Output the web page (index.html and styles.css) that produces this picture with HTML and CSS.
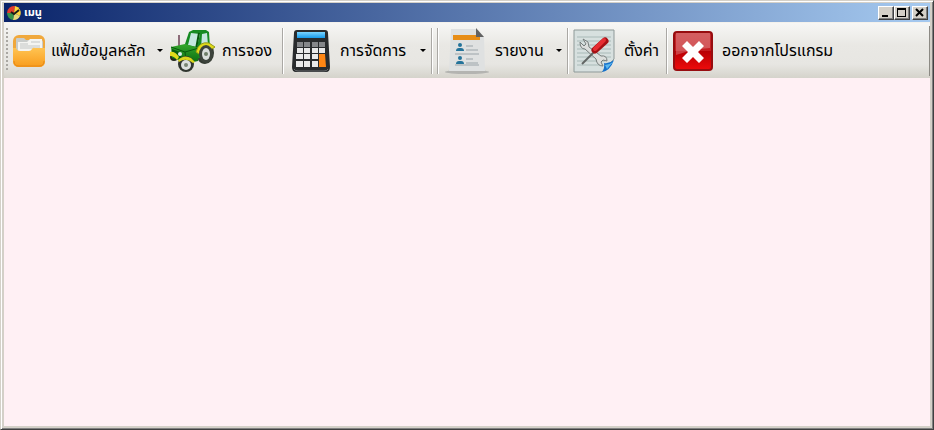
FILE: index.html
```
<!DOCTYPE html>
<html lang="th">

<head>
    <meta charset="UTF-8">
    <title>เมนู</title>
    <link rel="stylesheet" href="styles.css">
</head>

<body>
    <div id="window">
        <div id="title">
            <svg class="logo" viewBox="0 0 16 16">
                <path d="M8 8 1 8A7 7 0 0 1 9 1z" fill="#e43b2c" />
                <path d="M8 8 9 1A7 7 0 0 1 14 11z" fill="#ffd437" />
                <path d="M8 8 14 11A7 7 0 0 1 7 15z" fill="#e8d878" />
                <path d="M8 8 7 15A7 7 0 0 1 1 8z" fill="#39934a" />
                <path d="M5 7 8 9 13 5" fill="none" stroke="#1c1c18" stroke-width="2" />
            </svg>
            <span class="caption">เมนู</span>
            <button type="button" class="control" aria-label="Minimize">
                <svg viewBox="0 0 14 12"><path d="M3 8h6v2H3z" /></svg>
            </button>
            <button type="button" class="control" aria-label="Maximize">
                <svg viewBox="0 0 14 12"><path d="M2 1h9v9H2zM3 3v6h7V3z" fill-rule="evenodd" /></svg>
            </button>
            <button type="button" class="control close" aria-label="Close">
                <svg viewBox="0 0 14 12"><path d="M3 2 10 9M10 2 3 9" stroke="#000" stroke-width="2" /></svg>
            </button>
        </div>
        <div id="toolbar">
            <span class="grip"></span>
            <button type="button" class="item files">
                <svg class="icon" viewBox="0 0 34 36">
                    <defs>
                        <linearGradient id="folder" x2="0" y2="1">
                            <stop offset="0" stop-color="#ffc453" />
                            <stop offset="1" stop-color="#f99c1c" />
                        </linearGradient>
                    </defs>
                    <rect x="1" y="2" width="32" height="32" rx="6" fill="#f0a83c" />
                    <path d="M4 6q0-1 1-1h7l2 2h15q2 0 2 2v12H4z" fill="#c9ccca" />
                    <path d="M6 9h9l3-3h12v13H6z" fill="#f4f4f1" />
                    <path d="M8 11h8M19 9h9M8 13h20M8 15h20" stroke="#c3c6c5" />
                    <path d="M1 15h3q1 3 4 3h9q2 0 3-2t3-1h10v13q0 6-6 6H7q-6 0-6-6z" fill="url(#folder)" />
                    <path d="M2 28q0 5 5 5h20q5 0 5-5" fill="none" stroke="#e78a18" />
                </svg>
                <span class="label">แฟ้มข้อมูลหลัก</span>
                <span class="arrow"></span>
            </button>
            <button type="button" class="item booking">
                <svg class="icon" viewBox="0 0 48 44">
                    <defs>
                        <linearGradient id="hood" x2="0" y2="1">
                            <stop offset="0" stop-color="#35a82c" />
                            <stop offset="1" stop-color="#096b10" />
                        </linearGradient>
                    </defs>
                    <path d="M10 6v14" stroke="#8c6c79" stroke-width="2" />
                    <circle cx="5" cy="28" r="4" fill="#24291f" />
                    <ellipse cx="36" cy="24" rx="9" ry="11" fill="#343b32" />
                    <path d="M20 3 24 1h13l3 2 1 16-9 10-13 1-3-15z" fill="#168b22" />
                    <path d="m22 4-3 12 9 2 3-13zM33 5l5-1 1 12-7 3z" fill="#c4e7df" />
                    <path d="m30 4-3 16 1 9" fill="none" stroke="#06580c" stroke-width="2" />
                    <path d="m2 18 14-3 14 4-1 13-9 2-17-5z" fill="url(#hood)" />
                    <path d="m2 18 14 5 14-4M16 23l1 8" fill="none" stroke="#07570d" />
                    <path d="m3 20 8 3 2 7-10-4z" fill="#075b12" />
                    <circle cx="11" cy="25" r="2" fill="#d9ecef" />
                    <path d="M27 23Q30 12 40 14l6 4-3 2q-7-5-13 5z" fill="#e1db1b" stroke="#969b12" />
                    <ellipse cx="37" cy="25" rx="7" ry="9" fill="#3d433c" />
                    <ellipse cx="37" cy="25" rx="4" ry="6" fill="#d9dedb" />
                    <circle cx="37" cy="25" r="2" fill="#6d7e67" />
                    <path d="M1 23q5-1 9 5l-2 3q-3-4-7-4z" fill="#e1db1b" />
                    <ellipse cx="17" cy="35" rx="8" ry="8" fill="#30352f" />
                    <ellipse cx="17" cy="36" rx="5" ry="5" fill="#dce0de" />
                    <circle cx="17" cy="36" r="2" fill="#798575" />
                    <path d="M9 31q6-6 13-2l4 4-2 1q-7-6-14-1z" fill="#d9d51a" />
                </svg>
                <span class="label">การจอง</span>
            </button>
            <span class="line"></span>
            <button type="button" class="item manage">
                <svg class="icon" viewBox="0 0 40 44">
                    <defs>
                        <linearGradient id="screen" x2="0" y2="1">
                            <stop offset="0" stop-color="#7bd4ff" />
                            <stop offset="1" stop-color="#159aeb" />
                        </linearGradient>
                    </defs>
                    <path d="M6 1h28q3 0 3 3l2 34q0 5-4 5H5q-4 0-4-5L3 4q0-3 3-3z" fill="#292b2d" />
                    <path d="M3 40q1 2 4 2h26q3 0 4-2" fill="none" stroke="#6b6d6f" />
                    <path d="M6 3h28v6H6z" fill="url(#screen)" />
                    <path d="M6 13h6v5H6zM13 13h6v5h-6zM21 13h6v5h-6zM28 13h6v5h-6z" fill="#85878a" />
                    <path d="M6 19h6v5H6zM13 19h6v5h-6zM21 19h6v5h-6zM28 19h6v5h-6zM5 25h7v5H5zM13 25h6v5h-6zM21 25h6v5h-6zM5 32h7v6H5zM13 32h6v6h-6zM21 32h6v6h-6z" fill="#e9e9e9" />
                    <path d="M28 25h6l1 13h-7z" fill="#ff8614" />
                </svg>
                <span class="label">การจัดการ</span>
                <span class="arrow"></span>
            </button>
            <span class="line"></span>
            <span class="line"></span>
            <button type="button" class="item report">
                <svg class="icon" viewBox="0 0 46 46">
                    <ellipse cx="23" cy="44" rx="22" ry="2" fill="#b4b4b1" />
                    <path d="M7 1h25l8 8 1 34H5z" fill="#dfe1e1" />
                    <path d="M9 7h27v5H9z" fill="#e78d16" />
                    <path d="m32 0 8 9h-8z" fill="#626262" />
                    <circle cx="16" cy="17" r="2" fill="#24739a" />
                    <path d="M12 23q0-3 3-3h2q3 0 3 3z" fill="#24739a" />
                    <circle cx="16" cy="30" r="2" fill="#24739a" />
                    <path d="M12 36q0-3 3-3h2q3 0 3 3z" fill="#24739a" />
                    <path d="M22 18h7M22 22h12M11 26h24M22 31h7M22 35h12M11 37h24" stroke="#9ba4a9" />
                </svg>
                <span class="label">รายงาน</span>
                <span class="arrow"></span>
            </button>
            <span class="line"></span>
            <button type="button" class="item setting">
                <svg class="icon" viewBox="0 0 42 44">
                    <path d="M1 1h40v29L29 43H1z" fill="#d7e0df" stroke="#8e9998" />
                    <path d="M4 8h34M4 12h34M4 16h34M4 20h34M4 24h34M4 28h34M4 32h28M4 36h24" stroke="#a9bab8" />
                    <path d="m10 10 5 3 1 5 12 9q6-1 6 5l-4-1-2 2 2 4q-6 0-7-7L12 20q-5 0-5-7l4 4 2-2z" fill="#dcdedc" stroke="#777e7d" />
                    <path d="M22 22 9 35" stroke="#626665" stroke-width="2" />
                    <path d="m22 21 10-9" stroke="#a51014" stroke-width="7" stroke-linecap="round" />
                    <path d="m22 20 9-9" stroke="#e62d32" stroke-width="4" stroke-linecap="round" />
                    <path d="M41 31Q37 42 29 43q3-4 2-9 5 1 10-3z" fill="#1672cb" />
                    <path d="M32 36q4 0 8-3l-6 7z" fill="#5cb8ee" />
                </svg>
                <span class="label">ตั้งค่า</span>
            </button>
            <span class="line"></span>
            <button type="button" class="item exit">
                <svg class="icon" viewBox="0 0 40 40">
                    <defs>
                        <linearGradient id="red" x2="0" y2="1">
                            <stop offset="0" stop-color="#c62b2e" />
                            <stop offset="0.5" stop-color="#c51c20" />
                            <stop offset="0.51" stop-color="#b80005" />
                            <stop offset="1" stop-color="#ef0b0b" />
                        </linearGradient>
                    </defs>
                    <rect x="1" y="1" width="38" height="38" rx="3" fill="url(#red)" stroke="#970d10" stroke-width="2" />
                    <path d="M3 2h34v15Q20 18 3 24z" fill="#fff" fill-opacity="0.25" />
                    <path d="m14 10 6 6 6-6 5 5-6 6 6 6-5 5-6-6-6 6-5-5 6-6-6-6z" fill="#fff" />
                </svg>
                <span class="label">ออกจากโปรแกรม</span>
            </button>
            <span class="edge"></span>
        </div>
        <div id="main"></div>
    </div>
</body>

</html>
```

FILE: styles.css
```
* {
    box-sizing: border-box;
}

body {
    margin: 0;
    font-family: "Noto Sans Thai", "Noto Sans", "Liberation Sans", sans-serif;
    color: #000;
}

svg {
    display: block;
}

#window {
    display: flex;
    flex-direction: column;
    min-height: 100vh;
    padding: 2px;
    background-color: #d4d0c8;
    border: 1px solid;
    border-color: #d4d0c8 #404040 #404040 #d4d0c8;
    box-shadow: inset 1px 1px #fff, inset -1px -1px #808080;
}

#title {
    display: flex;
    align-items: center;
    height: 19px;
    padding: 0 2px;
    margin: 0 1px;
    background: linear-gradient(to right, #0a246a, #a6caf0);
}

#title .logo {
    width: 16px;
    height: 16px;
}

#title .caption {
    flex: 1;
    padding-left: 2px;
    color: #fff;
    font-size: 11px;
    font-weight: bold;
    line-height: 18px;
}

.control {
    width: 16px;
    height: 14px;
    padding: 0;
    background-color: #d4d0c8;
    border: 1px solid;
    border-color: #fff #404040 #404040 #fff;
    box-shadow: inset -1px -1px #808080;
}

.control.close {
    margin-left: 2px;
}

.control svg {
    width: 14px;
    height: 12px;
}

#toolbar {
    display: flex;
    align-items: center;
    height: 56px;
    margin: 0 1px;
    background: linear-gradient(#f7f7f5, #e9e8e4 40%, #e7e6e2 75%, #d5d3cb);
    border-top: 1px solid #f4f2ec;
    border-radius: 0 0 3px 3px;
}

.grip {
    width: 2px;
    height: 42px;
    margin: 0 4px 4px 2px;
    background: repeating-linear-gradient(#a9a7a2 0, #a9a7a2 2px, transparent 2px, transparent 4px);
}

.item {
    display: flex;
    flex: none;
    align-items: center;
    height: 52px;
    padding: 0 3px;
    background: none;
    border: 0;
    font-family: inherit;
    font-size: 16px;
    color: #000;
}

.item .icon {
    flex: none;
    margin-right: 5px;
}

.label {
    line-height: 24px;
    white-space: nowrap;
}

.arrow {
    margin-left: auto;
    border: 3px solid transparent;
    border-top-color: #000;
    border-bottom: 0;
}

.line {
    flex: none;
    width: 2px;
    height: 46px;
    margin: 0 2px;
    background-color: #aaa8a4;
    border-right: 1px solid #fff;
}

.edge {
    width: 1px;
    height: 50px;
    margin-left: auto;
    background-color: #8c8a84;
}

.files {
    width: 154px;
    padding-left: 0;
}

.files .icon {
    width: 34px;
    height: 36px;
}

.booking {
    width: 114px;
}

.booking .icon {
    width: 48px;
    height: 44px;
}

.manage {
    width: 143px;
    padding-left: 5px;
}

.manage .icon {
    width: 40px;
    height: 44px;
    margin-right: 9px;
}

.report {
    width: 124px;
}

.report .icon {
    width: 46px;
    height: 46px;
}

.setting {
    width: 93px;
    padding-left: 2px;
}

.setting .icon {
    width: 42px;
    height: 44px;
    margin-right: 9px;
}

.exit .icon {
    width: 40px;
    height: 40px;
    margin-right: 9px;
}

#main {
    flex: 1;
    margin: 0 1px 1px;
    background-color: #fff0f4;
}
```
